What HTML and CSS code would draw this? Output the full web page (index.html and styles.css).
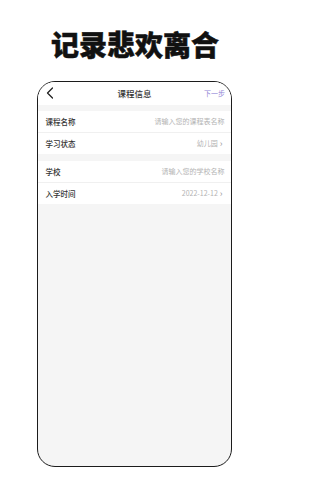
FILE: index.html
```html
<!DOCTYPE html>
<html lang="zh-CN">
<head>
<meta charset="utf-8">
<link rel="stylesheet" href="styles.css">
</head>
<body>
<h1 class="slogan">记录悲欢离合</h1>
<div class="phone">
  <div class="nav">
    <svg class="back" width="8" height="12" viewBox="0 0 8 12"><path d="M6.5 1 L1.5 6 L6.5 11" fill="none" stroke="#222" stroke-width="1.3" stroke-linecap="round" stroke-linejoin="round"/></svg>
    <span class="title">课程信息</span>
    <span class="next">下一步</span>
  </div>
  <div class="group">
    <div class="row"><span class="label">课程名称</span><span class="value">请输入您的课程表名称</span></div>
    <div class="row"><span class="label">学习状态</span><span class="value">幼儿园<span class="chev">›</span></span></div>
  </div>
  <div class="group">
    <div class="row"><span class="label">学校</span><span class="value">请输入您的学校名称</span></div>
    <div class="row"><span class="label">入学时间</span><span class="value">2022-12-12<span class="chev">›</span></span></div>
  </div>
</div>
</body>
</html>
```
FILE: styles.css
```css
html, body {
  margin: 0;
  padding: 0;
}
body {
  width: 270px;
  height: 480px;
  background: #fff;
  font-family: "Noto Sans CJK SC", "Noto Sans", sans-serif;
  overflow: hidden;
}
.slogan {
  margin: 0;
  padding-top: 29px;
  height: 30px;
  line-height: 30px;
  font-size: 28px;
  font-weight: 900;
  color: #111;
  text-align: center;
  letter-spacing: 0;
  -webkit-text-stroke: 0.5px #111;
}
.phone {
  margin: 22px 0 0 37px;
  width: 195px;
  height: 386px;
  box-sizing: border-box;
  border: 1.5px solid #1c1c1c;
  border-radius: 18px;
  background: #f5f5f5;
  overflow: hidden;
}
.nav {
  height: 22.5px;
  background: #fff;
  display: flex;
  align-items: center;
  position: relative;
  padding: 0 6px 0 8px;
}
.back {
  display: block;
}
.title {
  position: absolute;
  left: 0;
  right: 0;
  text-align: center;
  font-size: 8.5px;
  font-weight: 500;
  color: #333;
  pointer-events: none;
}
.next {
  margin-left: auto;
  font-size: 7px;
  color: #8f86d6;
}
.group {
  margin-top: 6px;
  background: #fff;
}
.group + .group {
  margin-top: 7px;
}
.row {
  height: 21px;
  display: flex;
  align-items: center;
  justify-content: space-between;
  padding: 0 6.5px 0 7.5px;
}
.row + .row {
  border-top: 1px solid #f0f0f0;
}
.label {
  font-size: 7.5px;
  font-weight: 500;
  color: #333;
}
.value {
  font-size: 7px;
  color: #b3b3b3;
  display: flex;
  align-items: center;
}
.chev {
  font-size: 9px;
  margin-left: 2px;
  margin-right: 2px;
  line-height: 1;
  color: #999;
}
```
